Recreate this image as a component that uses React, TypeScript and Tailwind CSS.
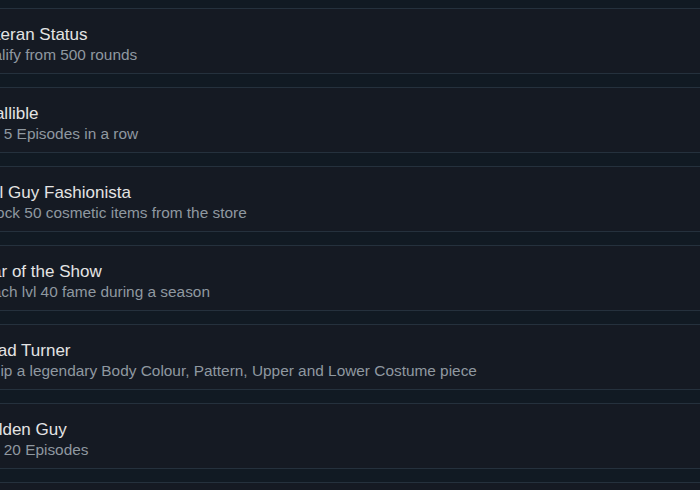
import React from "react";

const items = [
  { title: "Veteran Status", desc: "Qualify from 500 rounds" },
  { title: "Infallible", desc: "Win 5 Episodes in a row" },
  { title: "Fall Guy Fashionista", desc: "Unlock 50 cosmetic items from the store" },
  { title: "Star of the Show", desc: "Reach lvl 40 fame during a season" },
  { title: "Chad Turner", desc: "Equip a legendary Body Colour, Pattern, Upper and Lower Costume piece" },
  { title: "Golden Guy", desc: "Win 20 Episodes" },
  { title: "", desc: "" },
];

export default function App() {
  return (
    <div
      className="w-[700px] h-[490px] overflow-hidden bg-[#111a23] pt-[8px] flex flex-col gap-[13px]"
      style={{ fontFamily: '"Liberation Sans", Arial, sans-serif' }}
    >
      {items.map((it, i) => (
        <div
          key={i}
          className="shrink-0 h-[66px] border-y border-[#25313d] bg-[#151a23] flex flex-col pt-[16px] pl-0"
        >
          <div className="ml-[-24px] whitespace-nowrap">
            <div className="text-[17px] leading-[20px] text-[#e4e4e4]">{it.title}</div>
            <div className="ml-[-3px] text-[15.4px] leading-[18px] text-[#8f98a0] mt-[1px]">{it.desc}</div>
          </div>
        </div>
      ))}
    </div>
  );
}
